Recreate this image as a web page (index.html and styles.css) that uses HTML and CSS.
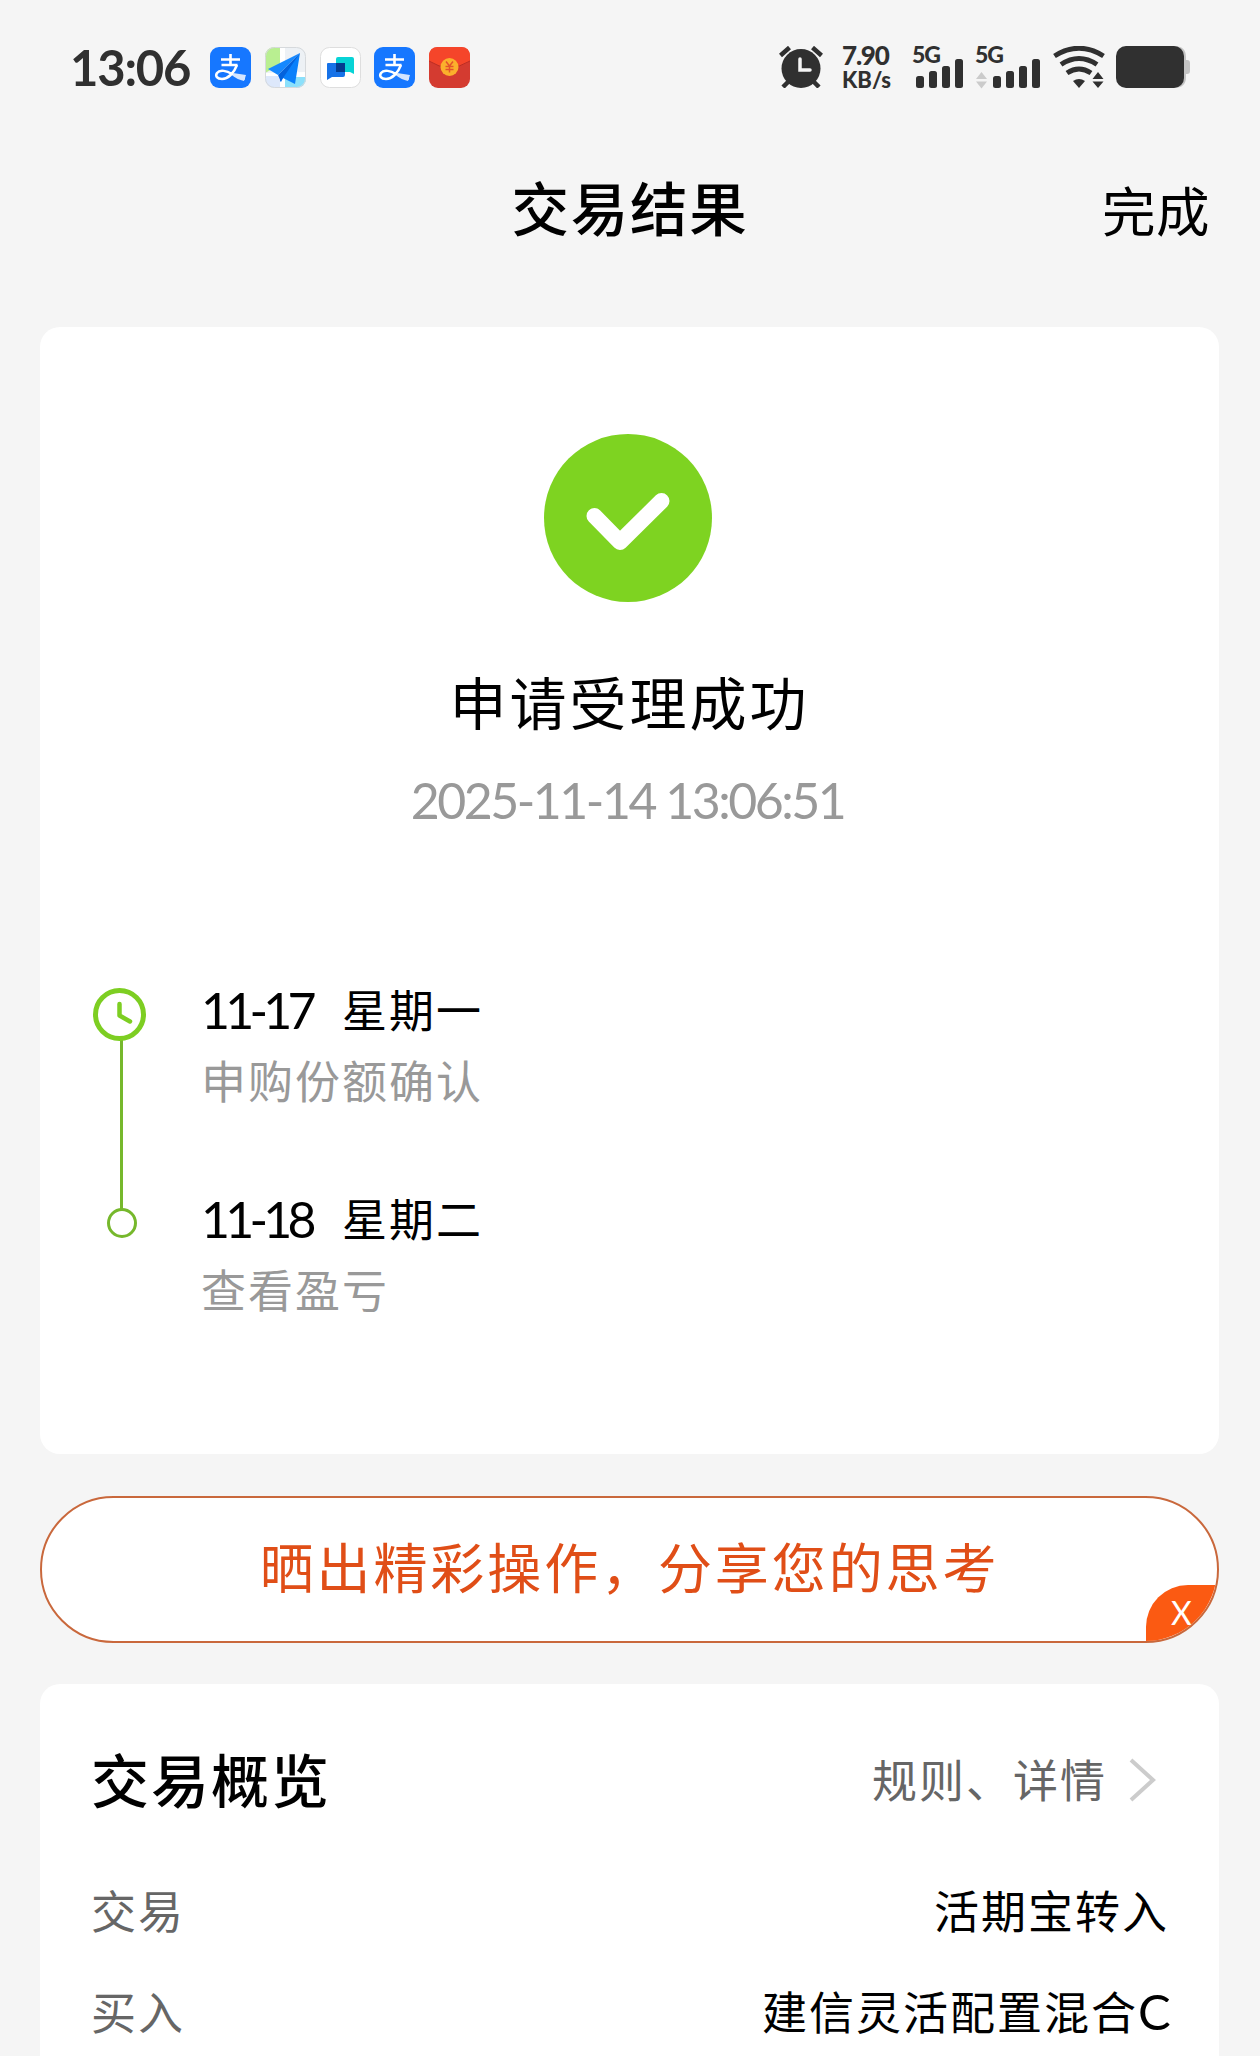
FILE: index.html
```html
<!DOCTYPE html>
<html lang="zh-CN">
<head>
  <meta charset="UTF-8" />
  <meta name="viewport" content="width=device-width, initial-scale=1.0"/>
  <title>交易结果</title>
  <link rel="stylesheet" href="styles.css">
</head>
<body>
<svg width="0" height="0" class="defs">
  <symbol id="alipay" viewBox="0 0 41 41">
    <rect width="41" height="41" rx="9" fill="#1677ff"/>
    <path d="M11 12.5h19M20.500 7v10M11.500 18h16" fill="none" stroke="#fff" stroke-width="2.600"/>
    <path d="M27 18c-3 8-9 14-15 14-5 0-7-3-5-6 3-4 10-2 15 1 5 2.500 8 4 13 4.500" fill="none" stroke="#fff" stroke-width="2.500"/>
    <path d="M23 26l13 2-2 6c-5-1-8-3-11-5z" fill="#d4e5ff"/>
  </symbol>
</svg>

<!-- Barra de status -->
<header class="status">
  <span class="hora">13:06</span>
  <div class="apps">
    <svg width="41" height="41"><use href="#alipay"/></svg>
    <svg width="41" height="41" viewBox="0 0 41 41">
      <clipPath id="mapa"><rect width="41" height="41" rx="9"/></clipPath>
      <g clip-path="url(#mapa)">
        <rect width="41" height="41" fill="#edf1f5"/>
        <path d="M0 0h15v18L0 26z" fill="#b9ef91"/>
        <path d="M15 0h5v41h-5zM0 26l41-1v5H0z" fill="#fff"/>
        <path d="M20 30h21v11H20z" fill="#8be0fb"/>
        <path d="M0 29h15v12H0z" fill="#dde8fb"/>
        <path d="M35 6L3 22l10 6z" fill="#1688ff"/>
        <path d="M35 6L15 28v7l3-4 12 6z" fill="#0a80fb"/>
        <path d="M35 6L13 28l3 7 2-4z" fill="#0462dc"/>
      </g>
      <rect x=".5" y=".5" width="40" height="40" rx="9" fill="none" stroke="#d6d9dc"/>
    </svg>
    <svg width="41" height="41" viewBox="0 0 41 41">
      <rect x=".5" y=".5" width="40" height="40" rx="9" fill="#fff" stroke="#dedede"/>
      <path d="M18 10h14q2 0 2 2v15l-4-2H18q-2 0-2-2V12q0-2 2-2z" fill="#07d3d6"/>
      <path d="M8 16h17v12q0 2-2 2H12l-5 3V17q0-1 1-1z" fill="#1672e8"/>
      <path d="M16 16h9v9h-9z" fill="#043c8f"/>
    </svg>
    <svg width="41" height="41"><use href="#alipay"/></svg>
    <svg width="41" height="41" viewBox="0 0 41 41">
      <rect width="41" height="41" rx="9" fill="#d43b30"/>
      <path d="M0 14V9q0-9 9-9h23q9 0 9 9v5q-20 13-41 0z" fill="#f5452a"/>
      <path d="M0 14q20 13 41 0" fill="none" stroke="#b92d25"/>
      <circle cx="20.500" cy="20" r="9" fill="#fbb02c"/>
      <path d="M17 14.500l3.500 4.500 3.500-4.500M16.500 19.500h8M16.500 22.500h8M20.500 19v6.500" fill="none" stroke="#e4532b" stroke-width="1.500"/>
    </svg>
  </div>
  <div class="sinais">
    <svg class="alarme" width="44" height="42" viewBox="0 0 44 42">
      <circle cx="22" cy="22.500" r="19.500"/>
      <path d="M1.500 9.500l9-8M42.500 9.500l-9-8M4 41l6-6M40 41l-6-6" fill="none" stroke="#303030" stroke-width="4.500"/>
      <path d="M21 13v11h10" fill="none" stroke="#f5f5f5" stroke-width="3.500" stroke-linecap="round"/>
    </svg>
    <div class="rede"><b>7.90</b><span>KB/s</span></div>
    <svg class="sinal" width="51" height="42" viewBox="0 0 51 42">
      <text x="-1" y="17">5G</text>
      <rect x="3" y="30" width="8" height="12" rx="2.500"/>
      <rect x="16" y="25" width="8" height="17" rx="2.500"/>
      <rect x="29" y="20" width="8" height="22" rx="2.500"/>
      <rect x="42" y="13" width="8" height="29" rx="2.500"/>
    </svg>
    <svg class="sinal sinal2" width="64" height="42" viewBox="0 0 64 42">
      <text x="-1" y="17">5G</text>
      <path d="M0 33l5.500-7 5.500 7zM0 35.500h11l-5.500 7z" fill="#cbcbcb"/>
      <rect x="17" y="30" width="8" height="12" rx="2.500"/>
      <rect x="30" y="25" width="8" height="17" rx="2.500"/>
      <rect x="43" y="20" width="8" height="22" rx="2.500"/>
      <rect x="56" y="13" width="8" height="29" rx="2.500"/>
    </svg>
    <svg class="wifi" width="52" height="42" viewBox="0 0 52 42">
      <path d="M1.500 10Q26-5.500 50.500 10M8 18.500q18-12 36 0M14 27q12-8 24 0" fill="none" stroke="#303030" stroke-width="5"/>
      <path d="M20 35q6-4 12 0l-6 7z"/>
      <path d="M39.500 33l5.500-7 5.500 7zM39.500 35.500h11L45 42z"/>
    </svg>
    <svg class="bateria" width="74" height="42" viewBox="0 0 74 42">
      <path d="M58 0q12 0 12 11v3h1q3 0 3 3v8q0 3-3 3h-1v3q0 11-12 11z" fill="#c4c4c4"/>
      <rect width="68" height="42" rx="10"/>
    </svg>
  </div>
</header>

<nav class="topo">
  <h1>交易结果</h1>
  <a class="concluir">完成</a>
</nav>

<section class="card resultado">
  <svg class="ok" width="168" height="168" viewBox="0 0 168 168">
    <circle cx="84" cy="84" r="84" fill="#7ed321"/>
    <path d="M50.500 82L76 108l41.500-41" fill="none" stroke="#fff" stroke-width="16" stroke-linecap="round" stroke-linejoin="round"/>
  </svg>
  <h2>申请受理成功</h2>
  <p class="data">2025-11-14 13:06:51</p>

  <div class="etapas">
    <svg class="linha" width="54" height="252" viewBox="0 0 54 252">
      <path d="M29.500 52v170" stroke="#76b82c" stroke-width="3"/>
      <circle cx="27.500" cy="27.500" r="24" fill="#fff" stroke="#7dce22" stroke-width="5"/>
      <path d="M27.500 17v11.500l10.500 6" fill="none" stroke="#7dce22" stroke-width="4.500" stroke-linecap="round" stroke-linejoin="round"/>
      <circle cx="30" cy="236" r="13.500" fill="#fff" stroke="#76b82c" stroke-width="3"/>
    </svg>
    <div class="lista">
      <div class="etapa">
        <div class="dia"><span class="num">11-17</span><span>星期一</span></div>
        <p>申购份额确认</p>
      </div>
      <div class="etapa">
        <div class="dia"><span class="num">11-18</span><span>星期二</span></div>
        <p>查看盈亏</p>
      </div>
    </div>
  </div>
</section>

<div class="partilhar">
  <span>晒出精彩操作，分享您的思考</span>
  <button type="button" class="fechar">X</button>
</div>

<section class="card resumo">
  <div class="titulo">
    <h3>交易概览</h3>
    <a class="regras">规则、详情
      <svg width="28" height="44" viewBox="0 0 28 44"><path d="M2 2l22 20L2 42" fill="none" stroke="#ccc" stroke-width="4"/></svg>
    </a>
  </div>
  <div class="item"><span class="rotulo">交易</span><span>活期宝转入</span></div>
  <div class="item"><span class="rotulo">买入</span><span class="fundo">建信灵活配置混合<i>C</i></span></div>
</section>
</body>
</html>
```
FILE: styles.css
```css
* {
  box-sizing: border-box;
}

body {
  margin: 0;
  height: 2056px;
  overflow: hidden;
  background: #f5f5f5;
  color: #000;
  font-family: "Noto Sans CJK SC", sans-serif;
}

h1, h2, h3, p {
  margin: 0;
  font-weight: 400;
}

svg {
  display: block;
  flex-shrink: 0;
}

.defs {
  position: absolute;
}

/* status */
.status {
  display: flex;
  align-items: center;
  height: 134px;
  padding: 0 70px;
  color: #303030;
  fill: #303030;
  font-family: Lato, sans-serif;
}

.hora {
  width: 140px;
  font-size: 49px;
  font-weight: 700;
  letter-spacing: -1.200px;
}

.apps {
  display: flex;
  gap: 13.800px;
}

.sinais {
  display: flex;
  margin-left: auto;
}

.rede {
  display: flex;
  flex-direction: column;
  width: 51px;
  height: 42px;
  margin-left: 19px;
  white-space: nowrap;
}

.rede b {
  font-size: 26px;
  line-height: 19px;
  font-weight: 900;
  letter-spacing: -1.200px;
}

.rede span {
  margin-top: 5px;
  font-size: 22px;
  line-height: 20px;
  font-weight: 900;
}

.sinal {
  margin-left: 20px;
  overflow: visible;
}

.sinal text {
  font-size: 23px;
  font-weight: 900;
  letter-spacing: -1px;
}

.sinal2 {
  margin-left: 12px;
}

.wifi {
  margin-left: 13px;
}

.bateria {
  margin-left: 11px;
}

/* topo */
.topo {
  display: grid;
  grid-template-columns: 1fr auto 1fr;
  align-items: center;
  height: 143px;
  padding: 0 50px;
}

.topo h1 {
  grid-column: 2;
  padding-top: 1px;
  font-size: 57.500px;
  font-weight: 500;
  line-height: 70px;
  letter-spacing: 1.800px;
}

.concluir {
  justify-self: end;
  padding-top: 7px;
  font-size: 53.500px;
  line-height: 70px;
  letter-spacing: .5px;
}

/* cards */
.card {
  margin: 0 41px 0 40px;
  background: #fff;
  border-radius: 20px;
}

.resultado {
  display: flex;
  flex-direction: column;
  align-items: center;
  height: 1127px;
  margin-top: 50px;
  padding-top: 107px;
}

.ok {
  margin-right: 3px;
}

.resultado h2 {
  margin-top: 63px;
  font-size: 57px;
  line-height: 70px;
  letter-spacing: 3px;
}

.data {
  margin-top: 35px;
  padding-right: 4px;
  color: #999;
  font-family: Lato, sans-serif;
  font-size: 50px;
  line-height: 60px;
  letter-spacing: -2.500px;
}

.etapas {
  display: flex;
  align-self: stretch;
  margin-top: 149px;
  padding-left: 52px;
}

.linha {
  margin-top: 8px;
}

.lista {
  margin-left: 55px;
}

.etapa {
  height: 209px;
  font-size: 45px;
  line-height: 60px;
  letter-spacing: 2px;
}

.dia {
  display: flex;
}

.num {
  width: 141px;
  padding-top: 1px;
  font-family: Lato, sans-serif;
  font-size: 50px;
  line-height: 60px;
  height: 60px;
  letter-spacing: -4.800px;
}

.etapa p {
  margin-top: 11px;
  color: #999;
}

/* botão de partilha */
.partilhar {
  position: relative;
  height: 147px;
  margin: 42px 41px 0 40px;
  overflow: hidden;
  border: 2px solid #c9683c;
  border-radius: 74px;
  background: #fff;
  color: #e04e17;
  font-size: 54px;
  line-height: 136px;
  letter-spacing: 2.900px;
  text-align: center;
}

.fechar {
  position: absolute;
  right: 0;
  bottom: 0;
  width: 71px;
  height: 56px;
  padding: 0 0 2px;
  border: none;
  border-radius: 42px 0 0 0;
  background: #fb5a12;
  color: #fff;
  font-family: Lato, sans-serif;
  font-size: 32px;
}

/* resumo */
.resumo {
  height: 420px;
  margin-top: 41px;
  padding: 59px 50px 0 51px;
}

.titulo {
  display: flex;
  justify-content: space-between;
  margin-bottom: 67px;
}

.titulo h3 {
  font-size: 58px;
  font-weight: 500;
  line-height: 70px;
  letter-spacing: 2px;
}

.regras {
  display: flex;
  align-items: center;
  height: 70px;
  padding: 2px 12px 0 0;
  color: #666;
  font-size: 45px;
  line-height: 60px;
  letter-spacing: 2px;
}

.regras svg {
  margin: 1px 0 0 22px;
}

.item {
  display: flex;
  justify-content: space-between;
  height: 60px;
  margin-bottom: 41px;
  font-size: 45px;
  line-height: 60px;
  letter-spacing: 2px;
}

.rotulo {
  color: #666;
}

.fundo {
  display: flex;
}

.fundo i {
  width: 31px;
  font-family: Lato, sans-serif;
  font-size: 49px;
  font-style: normal;
  letter-spacing: -2px;
}
```
